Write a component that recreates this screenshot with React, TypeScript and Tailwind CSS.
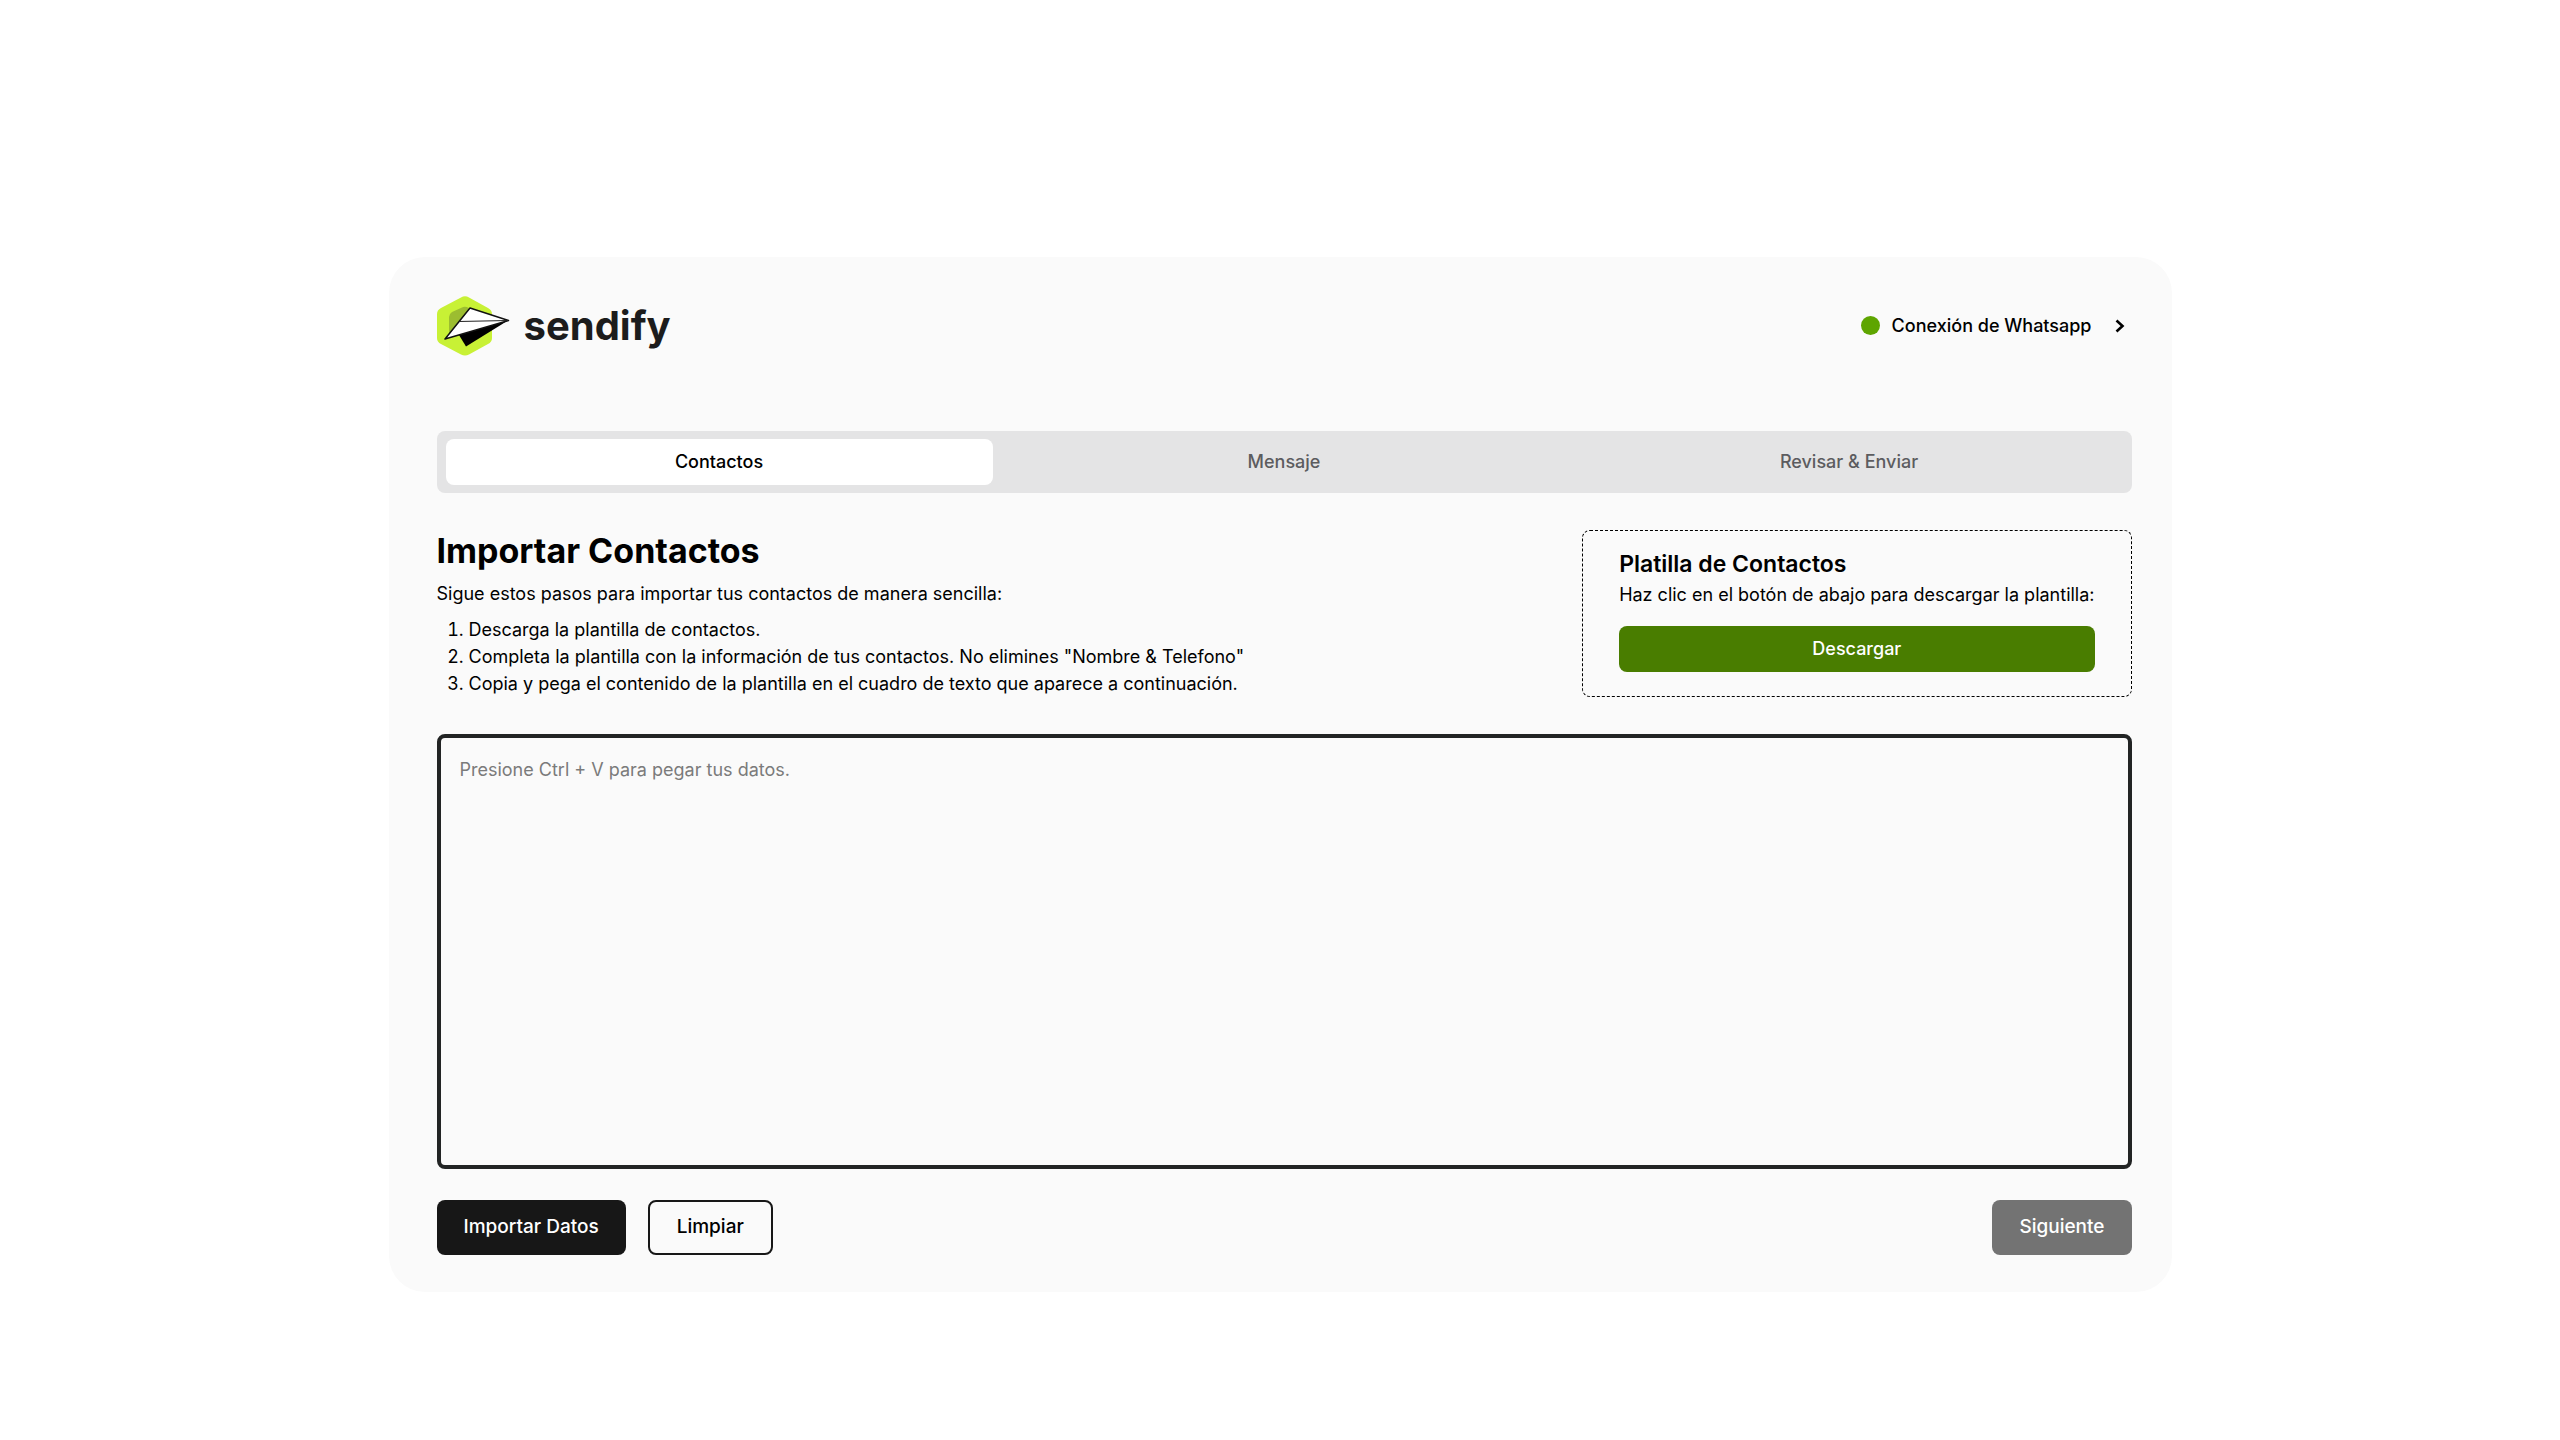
import { useState } from "react";

const TABS = ["Contactos", "Mensaje", "Revisar & Enviar"];

const STEPS = [
  "Descarga la plantilla de contactos.",
  'Completa la plantilla con la información de tus contactos. No elimines "Nombre & Telefono"',
  "Copia y pega el contenido de la plantilla en el cuadro de texto que aparece a continuación.",
];

function Logo() {
  return (
    <a href="#" className="flex items-center gap-3.5">
      <svg width="73" height="62" viewBox="0 0 73 62" aria-hidden="true">
        <path
          d="M24 2.5Q28 0 32 2.5L51 13Q55 15 55 19V43Q55 47 51 49L32 59.500Q28 61.500 24 59.500L4 49Q0 47 0 43V19Q0 15 4 13Z"
          fill="#c8f135"
        />
        <path d="M12 41V22Q12 19 15 17L25 12.500Q28 11 32 13L24 30Z" fill="#9cbd30" />
        <path d="M22 40L71 25.500L29 51.500Z" fill="#000" />
        <path
          d="M33 13L71.500 25.500L8 44Z"
          fill="#fff"
          stroke="#111"
          strokeWidth="1.500"
          strokeLinejoin="round"
        />
        <path d="M21.500 26.500L71 25.500" stroke="#222" strokeWidth="1.200" />
      </svg>
      <span className="text-[40px] leading-[50px] font-bold text-[#1c1c1c]">sendify</span>
    </a>
  );
}

function TemplateCard() {
  return (
    <section className="shrink-0 rounded-lg border border-dashed border-black px-9 pt-[17px] pb-6">
      <h2 className="text-[23px] leading-8 font-semibold">Platilla de Contactos</h2>
      <p className="leading-[30px]">Haz clic en el botón de abajo para descargar la plantilla:</p>
      <button
        type="button"
        className="mt-4 h-[46px] w-full rounded-lg bg-[#497d00] font-medium text-white"
      >
        Descargar
      </button>
    </section>
  );
}

export default function App() {
  const [tab, setTab] = useState(TABS[0]);
  const [data, setData] = useState("");

  return (
    <div className="flex min-h-screen items-center justify-center bg-white pt-27 font-['Inter','Liberation_Sans',sans-serif] text-[18px] text-black">
      <main className="w-full max-w-[1783px] rounded-[36px] bg-[#fafafa] pt-[38px] pr-10 pb-[37px] pl-12">
        <header className="flex items-center justify-between">
          <Logo />
          <button type="button" className="mr-[3px] flex items-center font-medium">
            <span className="mr-3 size-[19px] rounded-full bg-[#5ea500]" />
            Conexión de Whatsapp
            <svg
              className="ml-[19px] size-[18px]"
              viewBox="0 0 18 18"
              fill="none"
              stroke="currentColor"
              strokeWidth="2.600"
              aria-hidden="true"
            >
              <path d="M5.500 3.500L11.500 9L5.500 14.500" />
            </svg>
          </button>
        </header>

        <nav className="mt-[74px] grid grid-cols-3 gap-[18px] rounded-lg bg-[#e4e4e5] px-[9px] py-2">
          {TABS.map((t) => (
            <button
              key={t}
              type="button"
              onClick={() => setTab(t)}
              className={
                t === tab
                  ? "h-[46px] rounded-lg bg-white font-medium text-black"
                  : "h-[46px] rounded-lg font-medium text-[#5c5c5f]"
              }
            >
              {t}
            </button>
          ))}
        </nav>

        <div className="mt-[37px] flex items-start justify-between">
          <section>
            <h1 className="text-[34px] leading-[42px] font-bold">Importar Contactos</h1>
            <p className="mt-2 leading-[27px]">
              Sigue estos pasos para importar tus contactos de manera sencilla:
            </p>
            <ol className="mt-[9px] list-decimal pl-8 leading-[27px]">
              {STEPS.map((step) => (
                <li key={step}>{step}</li>
              ))}
            </ol>
          </section>
          <TemplateCard />
        </div>

        <textarea
          aria-label="Datos de contactos"
          value={data}
          onChange={(e) => setData(e.target.value)}
          placeholder="Presione Ctrl + V para pegar tus datos."
          className="mt-[37px] block h-[435px] w-full resize-none rounded-lg border-4 border-[#222424] px-[19px] py-[18px] leading-[27px] outline-none placeholder:text-[#7b7b7b]"
        />

        <footer className="mt-[31px] flex items-center gap-[22px] text-[19px] font-medium">
          <button type="button" className="h-[55px] rounded-lg bg-[#171717] px-[27px] text-white">
            Importar Datos
          </button>
          <button
            type="button"
            onClick={() => setData("")}
            className="h-[55px] rounded-lg border-2 border-[#171717] px-[27px]"
          >
            Limpiar
          </button>
          <button
            type="button"
            disabled
            className="ml-auto h-[55px] rounded-lg bg-[#737373] px-[27px] text-white"
          >
            Siguiente
          </button>
        </footer>
      </main>
    </div>
  );
}
